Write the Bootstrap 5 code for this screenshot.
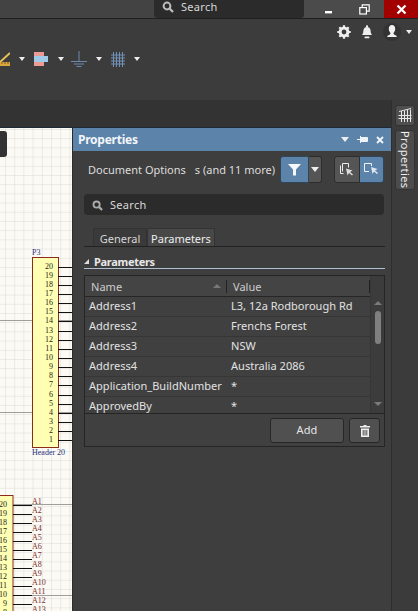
<!DOCTYPE html>
<html lang="en">
<head>
    <meta charset="UTF-8">
    <meta name="viewport" content="width=device-width, initial-scale=1.0">
    <title>Properties</title>
    <link href="https://cdn.jsdelivr.net/npm/bootstrap@5.3.2/dist/css/bootstrap.min.css" rel="stylesheet">
    <style>
        html, body { height: 100%; }
        body {
            width: 418px;
            height: 611px;
            overflow: hidden;
            background-color: #3b3b3b;
            font-family: "Noto Sans", "Open Sans", sans-serif;
            font-size: 11px;
            color: #e4e4e4;
        }
        svg { display: block; }

        /* title bar */
        .title-bar { height: 19px; background-color: #434343; border-bottom: 1px solid #1f1f1f; }
        .top-search {
            margin-left: 154px;
            width: 150px;
            height: 18px;
            background-color: #2b2b2b;
            border-radius: 0 0 4px 4px;
            color: #d8d8d8;
            padding: 0 0 4px 8px;
            gap: 7px;
            letter-spacing: .3px;
            line-height: 14px;
        }
        .win-btn { width: 40px; height: 18px; background-color: #4b4b4b; }
        .win-btn.win-min { padding-left: 10px; }
        .win-btn.win-close { width: 34px; background-color: #a30000; }

        /* toolbars */
        .tool-bar { height: 81px; background-color: #3c3c3c; position: relative; }
        .tool-row { height: 26px; gap: 10px; padding-right: 6px; }
        .tool-icons { position: absolute; left: 0; top: 30px; height: 20px; }
        .caret-mini { width: 0; height: 0; border-left: 3px solid transparent; border-right: 3px solid transparent; border-top: 4px solid #eee; }
        .caret-wide { border-left-width: 4px; border-right-width: 4px; border-top-width: 5px; }
        .caret-user { margin-left: -5px; }
        .ml-7 { margin-left: 7px; }
        .ml-9 { margin-left: 9px; }
        .ml-10 { margin-left: 10px; }
        .doc-strip { height: 28px; background-color: #333; border-bottom: 1px solid #1e2a36; }

        /* main area */
        .work-area { height: 511px; }
        .work-left { width: 391px; }
        .canvas-area { width: 72px; height: 483px; background-color: #fcfaf5; position: relative; overflow: hidden; }
        .canvas-tab { position: absolute; left: 0; top: 3px; width: 7px; height: 26px; background-color: #333; border-radius: 0 3px 3px 0; }

        /* properties panel */
        .props-panel { width: 319px; height: 483px; background-color: #3e3e3e; border-left: 1px solid #2b2b2b; }
        .props-head { height: 23px; background-color: #5c83a9; padding: 0 7px 0 5px; }
        .props-title { font-size: 12px; font-weight: 700; color: #f2f6fa; letter-spacing: -.25px; }
        .props-body { padding: 5px 6px 0 11px; }
        .doc-row { height: 27px; margin-bottom: 11px; padding-left: 4px; }
        .doc-label { width: 192px; padding-top: 2px; white-space: nowrap; color: #ddd; }
        .doc-label span { margin-left: 9px; }
        .tool-btn { height: 27px; border: 1px solid #2d2d2d; background-color: #555; display: flex; align-items: center; justify-content: center; }
        .tool-btn.on { background-color: #5c83a9; border-color: #2f4559; }
        .tool-btn.b-filter { width: 29px; border-radius: 3px 0 0 3px; }
        .tool-btn.b-drop { width: 13px; border-radius: 0 3px 3px 0; border-left: 0; margin-right: 12px; }
        .tool-btn.b-left { width: 26px; border-radius: 3px 0 0 3px; }
        .tool-btn.b-right { width: 24px; border-radius: 0 3px 3px 0; border-left: 0; }
        .panel-search {
            height: 21px;
            width: 300px;
            background-color: #2b2b2b;
            border-radius: 4px;
            padding: 1px 0 0 8px;
            gap: 7px;
            letter-spacing: .3px;
            margin-bottom: 13px;
            color: #d8d8d8;
        }
        .tabs-line { height: 19px; width: 301px; border-bottom: 1px solid #222; padding-left: 9px; }
        .tab-item { height: 18px; text-align: center; line-height: 19px; color: #d6d6d6; border: 1px solid #333; border-bottom: 0; border-radius: 2px 2px 0 0; background-color: #3a3a3a; }
        .tab-general { width: 54px; }
        .tab-params { width: 68px; }
        .tab-item.current { background-color: #484848; color: #eee; }
        .sect-head { width: 301px; height: 15px; margin-top: 7px; margin-bottom: 6px; padding-top: 1px; border-bottom: 1px solid #aebfd0; font-weight: 700; letter-spacing: -.3px; line-height: 13px; gap: 5px; color: #e8e8e8; }
        .sect-arrow { width: 0; height: 0; border-left: 5px solid transparent; border-bottom: 5px solid #ddd; }

        /* parameter grid */
        .param-box { width: 301px; height: 172px; border: 1px solid #252525; background-color: #404040; }
        .param-main { height: 138px; border-bottom: 1px solid #252525; }
        .param-list { width: 285px; }
        .param-table { width: 285px; margin: 0; table-layout: fixed; letter-spacing: .03px; }
        .param-table .col-name { width: 142px; }
        .param-table th, .param-table td {
            background-color: transparent;
            color: #e2e2e2;
            padding: 0 0 0 4px;
            height: 20px;
            line-height: 18px;
            font-weight: 400;
            border-bottom: 1px solid #363636;
            white-space: nowrap;
            overflow: hidden;
            box-shadow: none;
        }
        .param-table th { height: 20px; background-color: #444; color: #ccc; border-bottom: 1px solid #262626; padding-left: 6px; position: relative; }
        .param-table tr:last-child td { border-bottom: 0; }
        .col-split { position: absolute; right: 0; top: 4px; height: 13px; width: 1px; background-color: #222; }
        .sort-up { position: absolute; right: 6px; top: 8px; width: 0; height: 0; border-left: 4px solid transparent; border-right: 4px solid transparent; border-bottom: 4px solid #777; }
        .param-scroll { width: 15px; background-color: #3c3c3c; border-left: 1px solid #363636; padding-top: 20px; }
        .scroll-up, .scroll-down { width: 0; height: 0; border-left: 4px solid transparent; border-right: 4px solid transparent; margin: 5px auto 0; }
        .scroll-up { border-bottom: 4px solid #7a7a7a; }
        .scroll-down { border-top: 4px solid #7a7a7a; margin-top: 58px; }
        .scroll-thumb { width: 6px; height: 33px; background-color: #808080; border-radius: 3px; margin: 6px auto 0; }
        .param-foot { height: 33px; padding: 4px 4px 0 0; gap: 5px; }
        .foot-btn { height: 25px; padding: 0; border: 1px solid #262626; border-radius: 3px; background-color: #505050; color: #e6e6e6; font-size: 11px; letter-spacing: .2px; display: flex; align-items: center; justify-content: center; }
        .foot-btn.b-add { width: 74px; }
        .foot-btn.b-del { width: 31px; }

        /* right rail */
        .side-rail { width: 27px; background-color: #3b3b3b; border-left: 1px solid #2e2e2e; padding: 5px 0 0 3px; }
        .rail-icon { width: 20px; height: 21px; background-color: #4f4f4f; border: 1px solid #333; border-radius: 3px; margin-bottom: 4px; display: flex; align-items: center; justify-content: center; }
        .rail-tab { width: 20px; height: 60px; background-color: #4c4c4c; border: 1px solid #333; border-radius: 3px; color: #eee; display: flex; align-items: center; justify-content: center; }
        .rail-tab span { writing-mode: vertical-rl; letter-spacing: .4px; line-height: 1; }
    </style>
</head>
<body>
    <!-- title bar -->
    <div class="title-bar d-flex">
        <div class="top-search d-flex align-items-center">
            <svg width="12" height="12" viewBox="0 0 12 12"><circle cx="5" cy="5" r="3.4" fill="none" stroke="#bbb" stroke-width="2"/><path d="M7.5 7.5L11 11" stroke="#bbb" stroke-width="2.4"/></svg>
            <span>Search</span>
        </div>
        <div class="ms-auto d-flex">
            <div class="win-btn win-min d-flex align-items-center justify-content-center">
                <svg width="10" height="10" viewBox="0 0 10 10"><rect x="1" y="7" width="7" height="2.4" fill="#fff"/></svg>
            </div>
            <div class="win-btn d-flex align-items-center justify-content-center">
                <svg width="11" height="11" viewBox="0 0 11 11" fill="none" stroke="#fff" stroke-width="1.2"><rect x=".8" y="3.6" width="6.6" height="6.4"/><path d="M3.2 3.4V.8h7v6.4H7.6"/></svg>
            </div>
            <div class="win-btn win-close d-flex align-items-center justify-content-center">
                <svg width="11" height="11" viewBox="0 0 11 11"><path d="M1.5 1.5l8 8M9.5 1.5l-8 8" stroke="#fff" stroke-width="2.3"/></svg>
            </div>
        </div>
    </div>

    <!-- toolbars -->
    <div class="tool-bar">
        <div class="tool-row d-flex justify-content-end align-items-center">
            <svg width="14" height="14" viewBox="0 0 14 14"><circle cx="7" cy="7" r="3.9" fill="none" stroke="#eee" stroke-width="3"/><path d="M7 .3v3M7 10.7v3M.3 7h3M10.7 7h3M2.3 2.3l2 2M9.7 9.7l2 2M11.7 2.3l-2 2M4.3 9.7l-2 2" stroke="#eee" stroke-width="2.2"/></svg>
            <svg width="12" height="14" viewBox="0 0 12 14"><path d="M1 10c1.300-1.500 1.200-3 1.500-5C2.800 3 4.200 2 6 2s3.200 1 3.500 3c.3 2 .2 3.500 1.500 5z" fill="#eee"/><rect x="5" y=".4" width="2" height="2" fill="#eee"/><rect x="3.500" y="11.500" width="5" height="1.800" rx=".9" fill="#eee"/></svg>
            <svg width="18" height="18" viewBox="0 0 18 18"><circle cx="9" cy="9" r="9" fill="#333"/><path d="M9 2c2 0 3.200 1.500 3.200 3.700 0 2-.9 3.500-1.700 4.400 0 1.400.9 1.800 2.500 2.400.5.300.8.800.8 1.500H4.200c0-.7.300-1.200.8-1.500 1.600-.6 2.500-1 2.500-2.400-.8-.9-1.700-2.400-1.700-4.400C5.800 3.500 7 2 9 2z" fill="#f0f0f0"/></svg>
            <span class="caret-mini caret-user"></span>
        </div>
        <div class="tool-icons d-flex align-items-center">
            <svg width="10" height="16" viewBox="0 0 10 16"><path d="M0 11L10 2" stroke="#e4c35a" stroke-width="2"/><rect x="0" y="11" width="10" height="4" fill="#dca63f"/><path d="M2 11v2M5 11v2M8 11v2" stroke="#7a5a20"/></svg>
            <span class="caret-mini ml-9"></span>
            <svg class="ml-9" width="14" height="15" viewBox="0 0 14 15"><rect x="0" y="0" width="10" height="4" fill="#ec9a94"/><rect x="0" y="4" width="14" height="6" fill="#9fcbe8"/><rect x="0" y="10" width="10" height="4" fill="#ec9a94"/></svg>
            <span class="caret-mini ml-10"></span>
            <svg class="ml-7" width="16" height="16" viewBox="0 0 16 16" stroke="#6d89aa" stroke-width="1"><path d="M8 0v10M0 10.500h16M3 13h10M5.500 15.500h5"/></svg>
            <span class="caret-mini ml-9"></span>
            <svg class="ml-9" width="14" height="15" viewBox="0 0 14 15" stroke="#7391b8" stroke-width="1"><path d="M2.500 0v15M5.500 0v15M8.500 0v15M11.500 0v15M0 3h14M0 6h14M0 9h14M0 12h14"/></svg>
            <span class="caret-mini ml-9"></span>
        </div>
    </div>

    <div class="work-area d-flex">
        <div class="work-left">
            <div class="doc-strip"></div>
            <div class="d-flex">
                <!-- schematic sheet -->
                <div class="canvas-area">
                    <svg width="72" height="483" viewBox="0 0 72 483" font-family="Liberation Serif, serif" font-size="8">
                        <defs>
                            <pattern id="sheetGrid" x="5" y="1" width="9.200" height="9.200" patternUnits="userSpaceOnUse">
                                <path d="M9.200 0H0V9.200" fill="none" stroke="#dcdad5" stroke-width="1"/>
                            </pattern>
                        </defs>
                        <rect width="72" height="483" fill="url(#sheetGrid)"/>
                        <path d="M0 192.500H72M0 284.500H72M0 376.500H72M0 467.500H72" stroke="#a09e9a"/>
                        <g id="upperPart"></g>
                        <g id="lowerPart"></g>
                    </svg>
                    <div class="canvas-tab"></div>
                </div>

                <!-- properties panel -->
                <div class="props-panel">
                    <div class="props-head d-flex align-items-center">
                        <span class="props-title">Properties</span>
                        <span class="ms-auto caret-mini caret-wide"></span>
                        <svg class="ms-2" width="11" height="9" viewBox="0 0 11 9"><path d="M0 4.500h3M3.500 1v7M3.500 2.500h7v4h-7" fill="#eef3f8" stroke="#eef3f8"/></svg>
                        <svg class="ms-2" width="8" height="8" viewBox="0 0 8 8"><path d="M1 1l6 6M7 1L1 7" stroke="#f2f6fa" stroke-width="1.800"/></svg>
                    </div>
                    <div class="props-body">
                        <div class="doc-row d-flex align-items-center">
                            <div class="doc-label">Document Options<span>s (and 11 more)</span></div>
                            <div class="tool-btn on b-filter">
                                <svg width="13" height="13" viewBox="0 0 13 13"><path d="M0 1h13L8 6.500V12.500H5V6.500z" fill="#f4f8fb"/></svg>
                            </div>
                            <div class="tool-btn b-drop"><span class="caret-mini caret-wide"></span></div>
                            <div class="tool-btn b-left">
                                <svg width="14" height="14" viewBox="0 0 14 14" fill="none" stroke="#eee"><path d="M.5 2.500v8h3M2.500 8.500V.5h6v4"/><path d="M6 5.500l1.500 7 1.500-2.500 3 2.500 1-1-3-2.500 2.500-1.500z" fill="#ddd" stroke="none"/></svg>
                            </div>
                            <div class="tool-btn on b-right">
                                <svg width="15" height="13" viewBox="0 0 15 13" fill="none" stroke="#eef3f8"><path d="M5 8.500H.5V.5h7V3"/><path d="M7 4l1.500 7 1.500-2.500 3 2.500 1-1-3-2.500 2.500-1.500z" fill="#dfe8f0" stroke="none"/></svg>
                            </div>
                        </div>

                        <div class="panel-search d-flex align-items-center">
                            <svg width="11" height="11" viewBox="0 0 12 12"><circle cx="5" cy="5" r="3.400" fill="none" stroke="#aaa" stroke-width="2"/><path d="M7.500 7.500L11 11" stroke="#aaa" stroke-width="2.400"/></svg>
                            <span>Search</span>
                        </div>

                        <div class="tabs-line d-flex">
                            <div class="tab-item tab-general">General</div>
                            <div class="tab-item tab-params current">Parameters</div>
                        </div>

                        <div class="sect-head d-flex align-items-center">
                            <span class="sect-arrow"></span><span>Parameters</span>
                        </div>

                        <div class="param-box">
                            <div class="param-main d-flex">
                                <div class="param-list">
                                    <table class="table param-table">
                                        <colgroup><col class="col-name"><col></colgroup>
                                        <thead>
                                            <tr><th>Name<span class="sort-up"></span><span class="col-split"></span></th><th>Value<span class="col-split"></span></th></tr>
                                        </thead>
                                        <tbody>
                                            <tr><td>Address1</td><td>L3, 12a Rodborough Rd</td></tr>
                                            <tr><td>Address2</td><td>Frenchs Forest</td></tr>
                                            <tr><td>Address3</td><td>NSW</td></tr>
                                            <tr><td>Address4</td><td>Australia 2086</td></tr>
                                            <tr><td>Application_BuildNumber</td><td>*</td></tr>
                                            <tr><td>ApprovedBy</td><td>*</td></tr>
                                        </tbody>
                                    </table>
                                </div>
                                <div class="param-scroll">
                                    <div class="scroll-up"></div>
                                    <div class="scroll-thumb"></div>
                                    <div class="scroll-down"></div>
                                </div>
                            </div>
                            <div class="param-foot d-flex justify-content-end">
                                <button type="button" class="btn foot-btn b-add">Add</button>
                                <button type="button" class="btn foot-btn b-del">
                                    <svg width="10" height="12" viewBox="0 0 10 12"><path d="M3.500 1V0h3v1H10v1.500H0V1z" fill="#eee"/><path d="M1 3.500h8V12H1z" fill="#eee"/><path d="M3.200 5v5.500M5 5v5.500M6.800 5v5.500" stroke="#505050"/></svg>
                                </button>
                            </div>
                        </div>
                    </div>
                </div>
            </div>
        </div>

        <!-- right rail -->
        <div class="side-rail">
            <div class="rail-icon">
                <svg width="14" height="15" viewBox="0 0 14 15" stroke="#e6e6e6"><path d="M1 3.500L13 .5M3.500 3v11M6.500 2.500V14M9.500 2V14M12.500 1.500V14M.5 7.500h13M.5 10.500h13"/></svg>
            </div>
            <div class="rail-tab"><span>Properties</span></div>
        </div>
    </div>

    <script>
        // draws both connector parts on the sheet
        var NS = 'http://www.w3.org/2000/svg';
        function add(parent, tag, attrs, txt) {
            var el = document.createElementNS(NS, tag);
            for (var k in attrs) el.setAttribute(k, attrs[k]);
            if (txt !== undefined) el.textContent = txt;
            parent.appendChild(el);
        }
        var up = document.getElementById('upperPart');
        add(up, 'rect', {x: 32.5, y: 129.5, width: 26, height: 190, fill: '#ffffb4', stroke: '#8a2b1c'});
        add(up, 'text', {x: 32, y: 127, fill: '#1f2f80'}, 'P3');
        add(up, 'text', {x: 32, y: 327, fill: '#1f2f80'}, 'Header 20');
        for (var i = 0; i < 20; i++) {
            var y = 138.5 + i * 9.15;
            add(up, 'path', {d: 'M58 ' + Math.round(y) + '.5H72', stroke: '#111'});
            add(up, 'text', {x: 53, y: y + 2, 'text-anchor': 'end', fill: '#222'}, String(20 - i));
        }
        var low = document.getElementById('lowerPart');
        add(low, 'rect', {x: -10, y: 367.5, width: 23, height: 130, fill: '#ffffb4', stroke: '#8a2b1c'});
        for (var j = 0; j < 13; j++) {
            var ly = 376.5 + j * 9.05;
            add(low, 'path', {d: 'M13 ' + Math.round(ly) + '.5H32', stroke: '#111'});
            add(low, 'text', {x: 7, y: ly + 2, 'text-anchor': 'end', fill: '#222'}, String(20 - j));
            add(low, 'text', {x: 32, y: ly - 1, fill: '#7d2a2a'}, 'A' + (j + 1));
        }
    </script>
    <script src="https://cdn.jsdelivr.net/npm/bootstrap@5.3.2/dist/js/bootstrap.bundle.min.js"></script>
</body>
</html>
